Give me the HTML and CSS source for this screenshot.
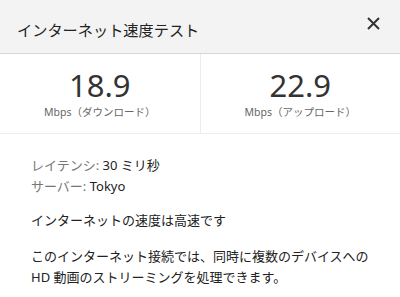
FILE: index.html
```html
<!DOCTYPE html>
<html lang="ja">
<head>
<meta charset="UTF-8">
<title>インターネット速度テスト</title>
<link rel="stylesheet" href="styles.css">
</head>
<body>
<div class="dialog">
  <div class="header">
    <h1>インターネット速度テスト</h1>
    <span class="close">
      <svg width="13" height="13" viewBox="0 0 13 13"><path d="M1 1L12 12M12 1L1 12" stroke="#333" stroke-width="2"/></svg>
    </span>
  </div>
  <div class="stats">
    <div class="stat">
      <div class="value">18.9</div>
      <div class="unit">Mbps（ダウンロード）</div>
    </div>
    <div class="stat">
      <div class="value">22.9</div>
      <div class="unit">Mbps（アップロード）</div>
    </div>
  </div>
  <div class="details">
    <div class="meta">
      <p><span class="key">レイテンシ:</span> 30 ミリ秒</p>
      <p><span class="key">サーバー:</span> Tokyo</p>
    </div>
    <p class="summary">インターネットの速度は高速です</p>
    <p class="summary note">このインターネット接続では、同時に複数のデバイスへの<br>HD 動画のストリーミングを処理できます。</p>
  </div>
</div>
</body>
</html>
```

FILE: styles.css
```css
body {
  margin: 0;
  background-color: #fff;
  font-family: "Noto Sans", "Noto Sans CJK JP", sans-serif;
  color: #222;
}
.header {
  display: flex;
  align-items: center;
  justify-content: space-between;
  height: 53px;
  padding: 0 20px 0 17px;
  background-color: #f3f3f3;
  border-bottom: 1px solid #d6d6d6;
}
h1 {
  margin: 4px 0 0;
  font-size: 15.2px;
  font-weight: normal;
  color: #222;
}
.close {
  display: flex;
  margin-top: -6px;
}
.stats {
  display: flex;
  height: 79px;
  border-bottom: 1px solid #ececec;
}
.stat {
  flex: 1;
  display: flex;
  flex-direction: column;
  align-items: center;
  padding-top: 16px;
}
.stat + .stat {
  border-left: 1px solid #ececec;
}
.value {
  font-size: 31px;
  line-height: 30px;
  color: #333;
}
.unit {
  margin-top: 5px;
  font-size: 10.5px;
  line-height: 15px;
  color: #666;
}
.details {
  padding: 21px 31px 18px;
  font-size: 13px;
  line-height: 21px;
}
.details p {
  margin: 0;
  white-space: nowrap;
}
.key {
  color: #777;
}
.details .summary {
  margin-top: 13px;
}
.details .note {
  margin-top: 15px;
}
```
